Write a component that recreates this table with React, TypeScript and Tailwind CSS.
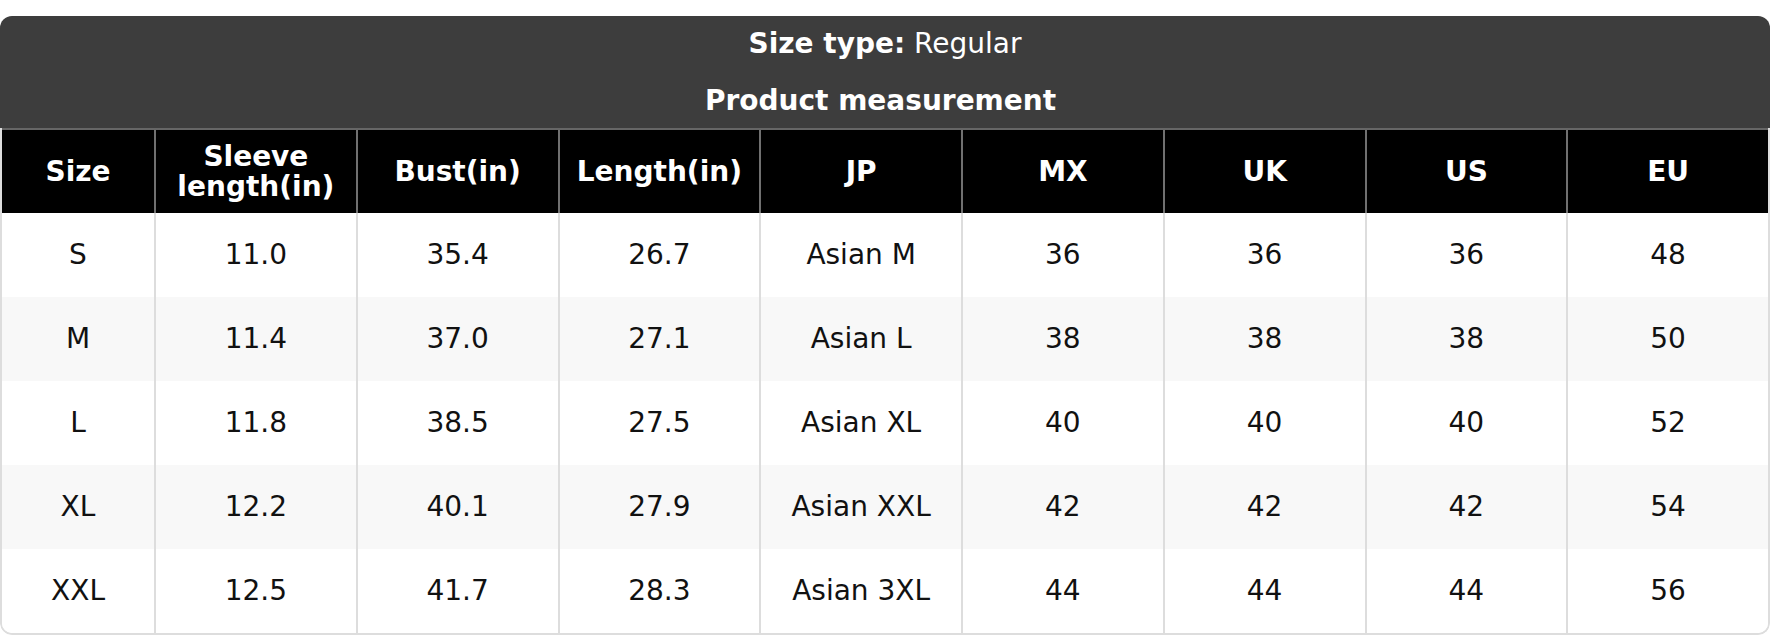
import React from "react";

const headers = ["Size", "Sleeve length(in)", "Bust(in)", "Length(in)", "JP", "MX", "UK", "US", "EU"];
const rows = [
  ["S", "11.0", "35.4", "26.7", "Asian M", "36", "36", "36", "48"],
  ["M", "11.4", "37.0", "27.1", "Asian L", "38", "38", "38", "50"],
  ["L", "11.8", "38.5", "27.5", "Asian XL", "40", "40", "40", "52"],
  ["XL", "12.2", "40.1", "27.9", "Asian XXL", "42", "42", "42", "54"],
  ["XXL", "12.5", "41.7", "28.3", "Asian 3XL", "44", "44", "44", "56"],
];

export default function App() {
  return (
    <div className="w-[1770px] h-[636px] bg-white pt-[16px]" style={{ fontFamily: '"DejaVu Sans", sans-serif' }}>
      <div className="rounded-[12px] overflow-hidden">
        <div className="bg-[#3d3d3d] h-[112px] flex flex-col items-center text-white text-[28px] pt-[9px]">
          <div className="leading-[38px]">
            <span className="font-bold">Size type:</span> Regular
          </div>
          <div className="leading-[38px] mt-[19px] font-bold pr-[9px]">Product measurement</div>
        </div>
        <div className="border-x-2 border-b-2 border-[#dddddd] rounded-b-[12px] overflow-hidden">
          <div className="grid grid-cols-[152px_repeat(8,minmax(0,1fr))] bg-black border-t-2 border-[#666666] h-[85px]">
            {headers.map((h, i) => (
              <div
                key={h}
                className={`flex items-center justify-center text-center text-white font-bold text-[28px] leading-[30px] px-[12px] ${i > 0 ? "border-l-2 border-[#707070]" : ""}`}
              >
                {h}
              </div>
            ))}
          </div>
          {rows.map((r, ri) => (
            <div
              key={ri}
              className={`grid grid-cols-[152px_repeat(8,minmax(0,1fr))] h-[84px] ${ri % 2 === 1 ? "bg-[#f8f8f8]" : "bg-white"}`}
            >
              {r.map((c, ci) => (
                <div
                  key={ci}
                  className={`flex items-center justify-center text-[28px] text-[#111111] ${ci > 0 ? "border-l-2 border-[#dddddd]" : ""}`}
                >
                  {c}
                </div>
              ))}
            </div>
          ))}
        </div>
      </div>
    </div>
  );
}
